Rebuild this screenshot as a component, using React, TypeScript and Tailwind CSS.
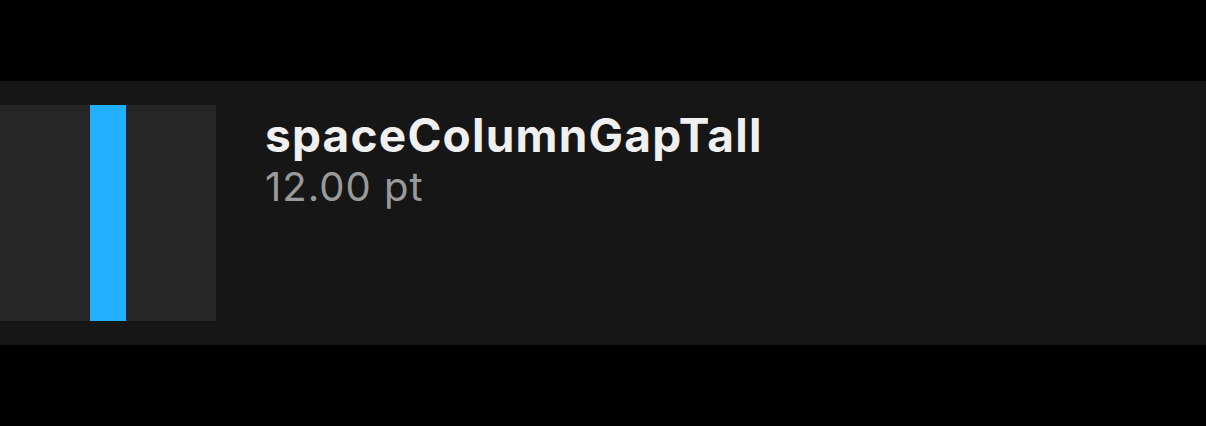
export default function App() {
  return (
    <div className="w-[1206px] h-[426px] bg-black pt-[81px]" style={{ fontFamily: 'Inter, "Noto Sans", sans-serif' }}>
      <div className="h-[264px] bg-[#161616] flex items-start py-6">
        <div className="w-[216px] h-[216px] bg-[#262626] flex shrink-0">
          <div className="w-[90px]" />
          <div className="w-[36px] h-full bg-[#22afff]" />
        </div>
        <div className="ml-[49px] mt-[5px] flex flex-col">
          <div className="text-[46px] leading-[50px] font-bold text-[#f0f0f0] tracking-[1.2px]">spaceColumnGapTall</div>
          <div className="text-[40px] leading-[54px] text-[#9a9a9a] tracking-[1px]">12.00 pt</div>
        </div>
      </div>
    </div>
  )
}
